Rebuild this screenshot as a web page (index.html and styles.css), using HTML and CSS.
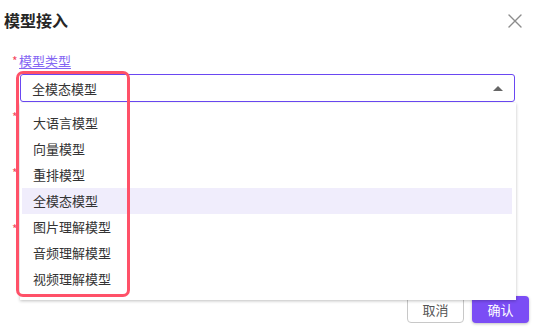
FILE: index.html
```html
<!DOCTYPE html>
<html lang="zh">
<head>
<meta charset="utf-8">
<title>模型接入</title>
<link rel="stylesheet" href="styles.css">
</head>
<body>
<div class="modal">
  <header class="modal-head">
    <h2 class="modal-title">模型接入</h2>
    <button class="close" type="button" aria-label="关闭">
      <svg width="14" height="14" viewBox="0 0 14 14"><path d="M1 1L13 13M13 1L1 13" stroke="#8c8c8c" stroke-width="1.4" fill="none" stroke-linecap="round"/></svg>
    </button>
  </header>
  <div class="modal-body">
    <div class="field">
      <label class="label"><span class="req">*</span><span class="label-text">模型类型</span></label>
      <div class="select-wrap">
        <div class="select">
          <span class="select-value">全模态模型</span>
          <span class="arrow"></span>
        </div>
        <ul class="dropdown">
          <li class="option">大语言模型</li>
          <li class="option">向量模型</li>
          <li class="option">重排模型</li>
          <li class="option active">全模态模型</li>
          <li class="option">图片理解模型</li>
          <li class="option">音频理解模型</li>
          <li class="option">视频理解模型</li>
        </ul>
        <div class="annot"></div>
      </div>
    </div>
    <div class="field">
      <div class="label"><span class="req">*</span></div>
      <div class="input"></div>
    </div>
    <div class="field">
      <div class="label"><span class="req">*</span></div>
      <div class="input"></div>
    </div>
    <div class="field last">
      <div class="label"><span class="req">*</span></div>
      <div class="input"></div>
    </div>
  </div>
  <footer class="modal-foot">
    <button class="btn btn-cancel" type="button">取消</button>
    <button class="btn btn-ok" type="button">确认</button>
  </footer>
</div>
</body>
</html>
```
FILE: styles.css
```css
* { box-sizing: border-box; }
html, body { margin: 0; padding: 0; background: #fff; }
body {
  font-family: "Noto Sans CJK SC", "Noto Sans", sans-serif;
  color: #333;
}
.modal {
  width: 537px;
  height: 331px;
  display: flex;
  flex-direction: column;
  overflow: hidden;
}
.modal-head {
  display: flex;
  justify-content: space-between;
  align-items: center;
  height: 40px;
  padding: 8px 15px 8px 4px;
}
.modal-title {
  margin: 0;
  font-size: 16px;
  line-height: 24px;
  font-weight: 700;
  color: #262626;
}
.close {
  border: 0;
  background: none;
  padding: 0;
  width: 14px;
  height: 14px;
  display: flex;
  margin-top: 2px;
}
.modal-body {
  padding: 11px 22px 0 12px;
}
.field {
  display: flex;
  flex-direction: column;
  margin-bottom: 5px;
}
.field.last {
  margin-top: 2px;
}
.label {
  height: 20px;
  line-height: 20px;
  font-size: 13px;
  display: flex;
  align-items: center;
  margin-bottom: 3px;
}
.req {
  color: #f5485e;
  width: 7px;
  font-size: 12px;
}
.label-text {
  color: #8466f3;
  text-decoration: underline;
  text-underline-offset: 2px;
}
.select-wrap {
  position: relative;
  margin-left: 8px;
}
.select {
  height: 28px;
  border: 1px solid #6a47f2;
  border-radius: 3px;
  display: flex;
  align-items: center;
  justify-content: space-between;
  padding: 0 11px 0 11px;
  font-size: 13px;
  color: #333;
}
.arrow {
  width: 0;
  height: 0;
  border-left: 5px solid transparent;
  border-right: 5px solid transparent;
  border-bottom: 5px solid #666;
}
.input {
  height: 28px;
  margin-left: 8px;
  border: 1px solid #d9d9d9;
  border-radius: 3px;
}
.dropdown {
  position: absolute;
  left: 0;
  top: calc(100% + 1px);
  width: 496px;
  margin: 0;
  padding: 7px 4px 8px 2px;
  list-style: none;
  background: #fff;
  box-shadow: 0 1px 3px rgba(0, 0, 0, 0.25);
  z-index: 5;
}
.option {
  height: 26px;
  line-height: 26px;
  padding-left: 11px;
  font-size: 13px;
  color: #333;
}
.option.active {
  background: #f0edfc;
}
.annot {
  position: absolute;
  left: -4px;
  top: -3px;
  width: 114px;
  height: 226px;
  border: 3px solid #ff5168;
  border-radius: 7px;
  z-index: 6;
  pointer-events: none;
}
.modal-foot {
  margin-top: auto;
  display: flex;
  justify-content: flex-end;
  gap: 8px;
  padding: 0 8px 8px 0;
}
.btn {
  width: 57px;
  height: 27px;
  border-radius: 4px;
  font-family: inherit;
  font-size: 13px;
  padding: 0;
}
.btn-cancel {
  background: #fff;
  border: 1px solid #c8c8c8;
  color: #555;
}
.btn-ok {
  background: #7b4df5;
  border: 0;
  color: #fff;
  box-shadow: 0 1px 3px rgba(0, 0, 0, 0.25);
}
```
